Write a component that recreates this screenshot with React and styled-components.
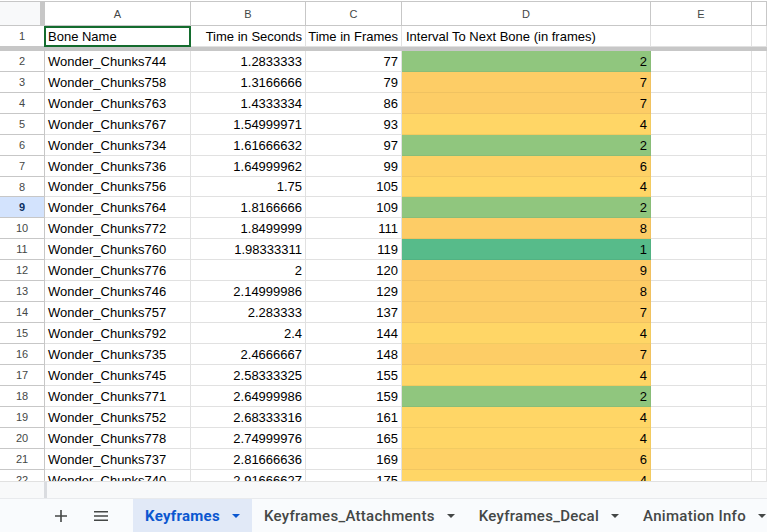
import React from 'react'
import styled, { createGlobalStyle } from 'styled-components'

const GlobalStyle = createGlobalStyle`
  html, body {
    margin: 0;
    padding: 0;
    background: #fff;
  }
`

const Page = styled.div`
  width: 767px;
  height: 532px;
  display: flex;
  flex-direction: column;
  overflow: hidden;
  font-family: 'Liberation Sans', Arial, sans-serif;
`

const Sheet = styled.div`
  height: 480px;
  margin-top: 1px;
  flex: none;
  overflow: hidden;
  border-top: 1px solid #c7c7c7;
  box-sizing: border-box;
  display: grid;
  grid-template-columns: 45px 146px 115px 96px 249px 101px 15px;
  grid-template-rows: 24px 21px 4px repeat(6, 21px) 20px;
  grid-auto-rows: 21px;
  align-content: start;
`

const Corner = styled.div`
  box-sizing: border-box;
  background: #f8f9fa;
  border-right: 5px solid #c7c7c7;
  border-bottom: 1px solid #c7c7c7;
`

const ColHead = styled.div`
  box-sizing: border-box;
  display: flex;
  align-items: center;
  justify-content: center;
  border-right: 1px solid #c7c7c7;
  border-bottom: 1px solid #c7c7c7;
  font-size: 11px;
  color: #444746;
`

const RowHead = styled.div`
  display: flex;
  align-items: center;
  justify-content: center;
  box-sizing: border-box;
  border-right: 1px solid #c7c7c7;
  border-bottom: 1px solid #c7c7c7;
  font-size: 11px;
  font-weight: ${(props) => (props.active ? 700 : 400)};
  color: ${(props) => (props.active ? '#0b2f62' : '#444746')};
  background: ${(props) => (props.active ? '#d3e3fd' : '#fff')};
`

const Cell = styled.div`
  display: flex;
  align-items: center;
  justify-content: ${(props) => (props.right ? 'flex-end' : 'flex-start')};
  padding: 0 3px;
  box-sizing: border-box;
  min-width: 0;
  white-space: nowrap;
  overflow: hidden;
  font-size: 13px;
  color: #000;
  background: ${(props) => props.fill || '#fff'};
  border-right: 1px solid ${(props) => props.line || '#e1e1e1'};
  border-bottom: 1px solid ${(props) => props.line || '#e1e1e1'};
`

const SelectedCell = styled(Cell)`
  border: 2px solid #146c2e;
  padding: 0 2px;
  margin-left: -1px;
`

const FreezeBar = styled.div`
  grid-column: 1 / -1;
  background: #c7c7c7;
`

const IntervalHead = styled(Cell)`
  padding-left: 4px;
`

const ScrollStrip = styled.div`
  height: 18px;
  flex: none;
  box-sizing: border-box;
  background: #f8f9fa;
  border-top: 1px solid #e1e1e1;
  border-bottom: 1px solid #e8eaed;
  padding-left: 44px;
`

const ScrollGrip = styled.div`
  width: 3px;
  height: 100%;
  background: #dadce0;
`

const TabBar = styled.div`
  flex: 1;
  display: flex;
  align-items: stretch;
  background: #f9fbfd;
  white-space: nowrap;
  overflow: hidden;
`

const ToolBtn = styled.button`
  width: 40px;
  padding: 0;
  border: 0;
  background: none;
  display: flex;
  align-items: center;
  justify-content: center;
  flex: none;
`

const Tools = styled.div`
  display: flex;
  margin-left: 41px;
  margin-right: 12px;
`

const Tab = styled.div`
  display: flex;
  align-items: center;
  flex: none;
  gap: 12px;
  padding: 0 12px;
  background: ${(props) => (props.active ? '#e1e9f7' : 'transparent')};
  color: ${(props) => (props.active ? '#0b57d0' : '#444746')};
  font-family: Roboto, 'Liberation Sans', sans-serif;
  font-size: 15px;
  font-weight: ${(props) => (props.active ? 700 : 500)};
  letter-spacing: 0.28px;
`

const Caret = styled.span`
  width: 0;
  height: 0;
  border-left: 4px solid transparent;
  border-right: 4px solid transparent;
  border-top: 4px solid currentColor;
`

const rows = [
  ['744', '1.2833333', 77, 2],
  ['758', '1.3166666', 79, 7],
  ['763', '1.4333334', 86, 7],
  ['767', '1.54999971', 93, 4],
  ['734', '1.61666632', 97, 2],
  ['736', '1.64999962', 99, 6],
  ['756', '1.75', 105, 4],
  ['764', '1.8166666', 109, 2],
  ['772', '1.8499999', 111, 8],
  ['760', '1.98333311', 119, 1],
  ['776', '2', 120, 9],
  ['746', '2.14999986', 129, 8],
  ['757', '2.283333', 137, 7],
  ['792', '2.4', 144, 4],
  ['735', '2.4666667', 148, 7],
  ['745', '2.58333325', 155, 4],
  ['771', '2.64999986', 159, 2],
  ['752', '2.68333316', 161, 4],
  ['778', '2.74999976', 165, 4],
  ['737', '2.81666636', 169, 6],
  ['740', '2.91666627', 175, 4],
]

const scale = {
  1: ['#57bb8a', '#52b283'],
  2: ['#90c67e', '#89bd78'],
  4: ['#ffd666', '#f2cb61'],
  6: ['#fed166', '#f1c661'],
  7: ['#fdcd66', '#f0c261'],
  8: ['#fdcc66', '#f0c161'],
  9: ['#fdca66', '#f0c061'],
}

const heads = ['A', 'B', 'C', 'D', 'E']

export default function App() {
  return (
    <Page>
      <GlobalStyle />
      <Sheet>
        <Corner />
        {heads.map((h) => (
          <ColHead key={h}>{h}</ColHead>
        ))}
        <ColHead />

        <RowHead>1</RowHead>
        <SelectedCell>Bone Name</SelectedCell>
        <Cell right>Time in Seconds</Cell>
        <Cell right>Time in Frames</Cell>
        <IntervalHead>Interval To Next Bone (in frames)</IntervalHead>
        <Cell />
        <Cell />
        <FreezeBar />

        {rows.map((r, i) => (
          <React.Fragment key={r[0]}>
            <RowHead active={i + 2 === 9}>{i + 2}</RowHead>
            <Cell>Wonder_Chunks{r[0]}</Cell>
            <Cell right>{r[1]}</Cell>
            <Cell right>{r[2]}</Cell>
            <Cell right fill={scale[r[3]][0]} line={scale[r[3]][1]}>
              {r[3]}
            </Cell>
            <Cell />
            <Cell />
          </React.Fragment>
        ))}
      </Sheet>
      <ScrollStrip>
        <ScrollGrip />
      </ScrollStrip>
      <TabBar>
        <Tools>
          <ToolBtn aria-label="Add sheet">
            <svg width="12" height="12" viewBox="0 0 12 12">
              <path d="M5.2 0h1.6v5.2H12v1.6H6.8V12H5.2V6.8H0V5.2h5.2z" fill="#444746" />
            </svg>
          </ToolBtn>
          <ToolBtn aria-label="All sheets">
            <svg width="14" height="10" viewBox="0 0 14 10">
              <path d="M0 0h14v1.4H0zM0 4.3h14v1.4H0zM0 8.6h14V10H0z" fill="#444746" />
            </svg>
          </ToolBtn>
        </Tools>
        <Tab active>
          Keyframes
          <Caret />
        </Tab>
        <Tab>
          Keyframes_Attachments
          <Caret />
        </Tab>
        <Tab>
          Keyframes_Decal
          <Caret />
        </Tab>
        <Tab>
          Animation Info
          <Caret />
        </Tab>
      </TabBar>
    </Page>
  )
}
